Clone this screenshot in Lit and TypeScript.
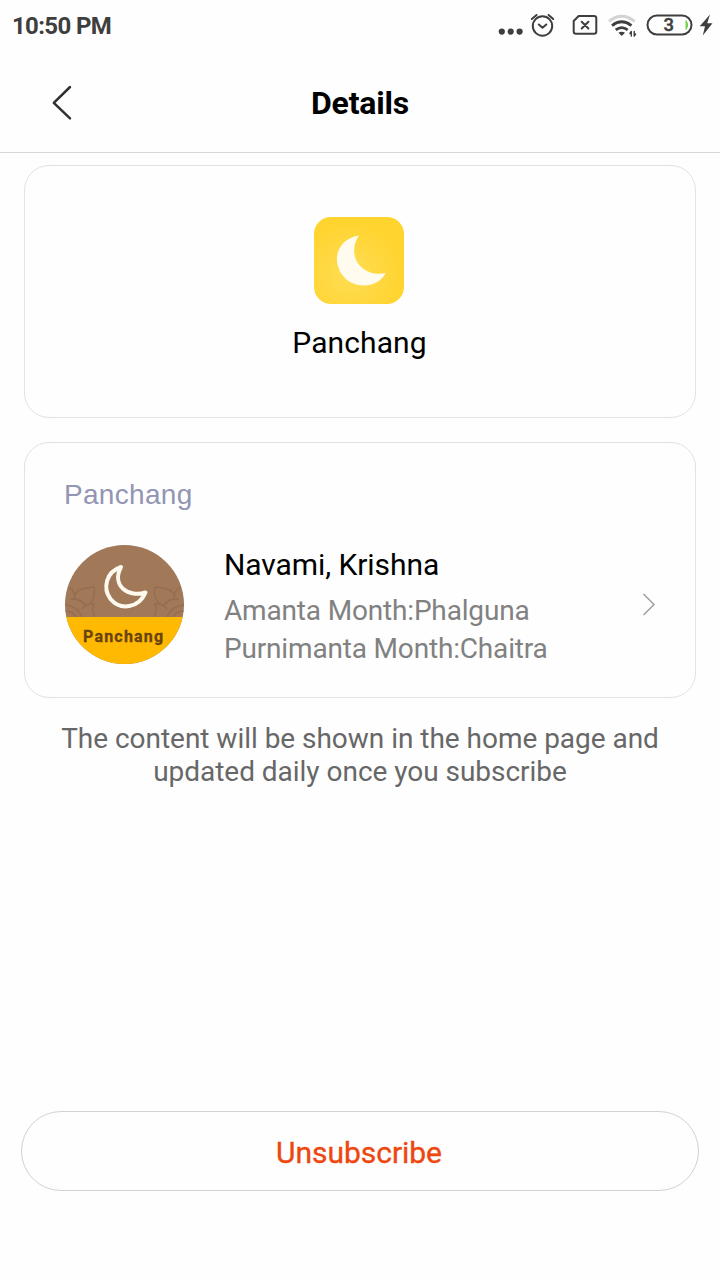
import { LitElement, html, css } from "lit";
import { customElement } from "lit/decorators.js";

@customElement("status-bar")
class StatusBar extends LitElement {
  static styles = css`
    :host { display: flex; justify-content: space-between; height: 52px; box-sizing: border-box; color: #3e3e3e; }
    .time { padding-left: 12px; font-size: 24px; font-weight: 700; line-height: 53px; white-space: nowrap; letter-spacing: -.65px; }
    .icons { display: block; width: 230px; height: 50px; }
    .level { font: 500 18.5px Roboto, sans-serif; }
  `;
  render() {
    return html`
      <div class="time">10:50 PM</div>
      <svg class="icons" viewBox="0 0 230 50" fill="none" stroke="#3e3e3e" stroke-width="2" stroke-linecap="round" stroke-linejoin="round">
        <g fill="#3e3e3e" stroke="none"><circle cx="11.8" cy="31.6" r="3.1"/><circle cx="20.7" cy="31.6" r="3.1"/><circle cx="29.6" cy="31.6" r="3.1"/></g>
        <circle cx="52.5" cy="26" r="9.7"/><path d="M48.8 24.5l3.7 3.2 3.8-3.2M41.8 19l4.8-4M58.6 15l4.6 4"/>
        <path d="M88.7 16H104a2.3 2.3 0 0 1 2.3 2.3v13.2a2.3 2.3 0 0 1-2.3 2.3H86a2.3 2.3 0 0 1-2.3-2.3V21z"/><path d="M91.7 21.8l6.7 6.7m0-6.7l-6.7 6.7"/>
        <g stroke-linecap="butt"><path stroke="#d3d3d3" stroke-width="2.8" d="M119 21.4q12.8-10.2 25.7 0"/><path stroke-width="2.8" d="M122 25.6q9.7-7.6 19.4 0M125.7 29.8q6-4.4 12 0"/></g>
        <path d="M128.4 32.8q3.3-2.1 6.6 0l-3.3 3.1z" fill="#3e3e3e" stroke="none"/>
        <path d="M141.3 36v-4.5l-1.4 2M144.2 31.5v4.5l1.4-2" stroke-width="1.4"/>
        <rect x="157.5" y="15.5" width="44" height="19" rx="9.5"/><path d="M196.2 20.8q3 4.2 0 8.4z" fill="#66cc3b" stroke="#66cc3b" stroke-width=".8"/>
        <text class="level" x="178.8" y="31.3" text-anchor="middle" fill="#3e3e3e" stroke="#3e3e3e" stroke-width=".4">3</text>
        <path d="M220 14.5l-10.3 11.7h5.3l-2.2 9.3 9.7-12.2h-5.3z" fill="#3e3e3e" stroke="none"/>
      </svg>`;
  }
}

@customElement("app-root")
class AppRoot extends LitElement {
  static styles = css`
    :host { display: flex; flex-direction: column; height: 1280px; width: 720px; box-sizing: border-box; background: #fefefe; font-family: Roboto, sans-serif; color: #000; overflow: hidden; }
    svg { display: block; flex: none; }
    header { display: grid; grid-template-columns: 120px 1fr 120px; align-items: center; height: 101px; box-sizing: border-box; border-bottom: 1px solid #d6d6d6; text-align: center; }
    .back { width: 24px; height: 40px; margin-left: 50px; }
    h1 { margin: 0; padding-top: 2px; font-size: 32px; line-height: 40px; font-weight: 700; letter-spacing: -.2px; }
    main { display: flex; flex-direction: column; padding: 12px 24px 0; gap: 24px; }
    .card { box-sizing: border-box; border: 1px solid #e2e2e2; border-radius: 25px; background: #fefefe; }
    .summary { height: 253px; padding-top: 51px; display: flex; flex-direction: column; align-items: center; }
    .app-icon { width: 90px; height: 87px; margin-right: 2px; }
    .name { margin: 20px 1px 0 0; font-size: 30px; line-height: 38px; letter-spacing: .1px; }
    .detail { height: 256px; padding: 35px 39px 0 40px; }
    h2 { margin: 0 0 0 -1px; font: 400 28px/34px "Liberation Sans", sans-serif; letter-spacing: .3px; color: #9295b3; }
    .entry { display: flex; align-items: center; margin-top: 32px; height: 120px; }
    .emblem { width: 120px; height: 120px; margin-top: 2px; }
    .caption { font: 700 16px Roboto, sans-serif; letter-spacing: .9px; }
    .copy { flex: 1; margin-left: 39px; padding-top: 5px; white-space: nowrap; font-size: 28px; line-height: 38px; letter-spacing: -.17px; color: #818181; }
    .headline { font-size: 30px; line-height: 40px; margin-bottom: 7px; letter-spacing: -.07px; color: #000; }
    .chevron { width: 14px; height: 24px; }
    .note { margin: 24px 0 0; text-align: center; font-size: 28px; line-height: 33px; letter-spacing: -.03px; color: #676767; }
    .action { margin: auto 21px 89px; height: 80px; flex: none; box-sizing: border-box; border: 1px solid #d2d2d2; border-radius: 40px; background: transparent; font: 400 30px Roboto, sans-serif; letter-spacing: -.03px; -webkit-text-stroke: .35px #ed470f; color: #ed470f; padding: 2px 2px 0 0; }
  `;
  render() {
    return html`
      <status-bar></status-bar>
      <header>
        <svg class="back" viewBox="0 0 24 40" fill="none" stroke="#303030" stroke-width="2.5" stroke-linecap="round" stroke-linejoin="round"><path d="M20 5L3.8 20.8l16.2 15.5"/></svg>
        <h1>Details</h1>
      </header>
      <main>
        <section class="card summary">
          <svg class="app-icon" viewBox="0 0 90 87">
            <defs><radialGradient id="sun" cx=".4" cy=".65" r=".6"><stop stop-color="#ffdd55"/><stop offset="1" stop-color="#ffd42f"/></radialGradient></defs>
            <rect width="90" height="87" rx="17" fill="url(#sun)"/>
            <path d="M44.8 18.5C27 21.5 19 37 24.8 51.5C32 72 62 74.5 71.7 56C50 61 31 41 44.8 18.5z" fill="#fffcef"/>
          </svg>
          <div class="name">Panchang</div>
        </section>
        <section class="card detail">
          <h2>Panchang</h2>
          <div class="entry">
            <svg class="emblem" viewBox="0 0 120 120">
              <defs><clipPath id="disc"><circle cx="59.5" cy="59.5" r="59.5"/></clipPath></defs>
              <g clip-path="url(#disc)">
                <rect width="120" height="120" fill="#a17858"/>
                <g fill="none" stroke="#966d50" stroke-width="1.5">
                  <g id="petals"><path d="M4 42q6 4 6 12M9 50q4-7 20-8q2 9-4 17M5 54q10-1 15 6M17 64q5-6 12-5q-3 7 1 13M0 60q13 1 17 12M0 66q8 0 11 6"/></g>
                  <use href="#petals" transform="matrix(-1 0 0 1 119 0)"/>
                </g>
                <rect y="72" width="120" height="48" fill="#ffb900"/>
              </g>
              <path d="M56 22C41 27 37.500 43 45.500 54C55.500 66 74 63 80.500 47.500C64 53 46 41 56 22z" fill="none" stroke="#fffaf0" stroke-width="4" stroke-linejoin="round"/>
              <text class="caption" x="58.500" y="97" text-anchor="middle" fill="#694310" stroke="#694310" stroke-width=".3" textLength="81">Panchang</text>
            </svg>
            <div class="copy">
              <div class="headline">Navami, Krishna</div>
              <div>Amanta Month:Phalguna</div>
              <div>Purnimanta Month:Chaitra</div>
            </div>
            <svg class="chevron" viewBox="0 0 14 24" fill="none" stroke="#a0a0a0" stroke-width="1.5"><path d="M1.5 2L12 12.5 1.5 23"/></svg>
          </div>
        </section>
      </main>
      <p class="note">The content will be shown in the home page and<br>updated daily once you subscribe</p>
      <button class="action">Unsubscribe</button>`;
  }
}
